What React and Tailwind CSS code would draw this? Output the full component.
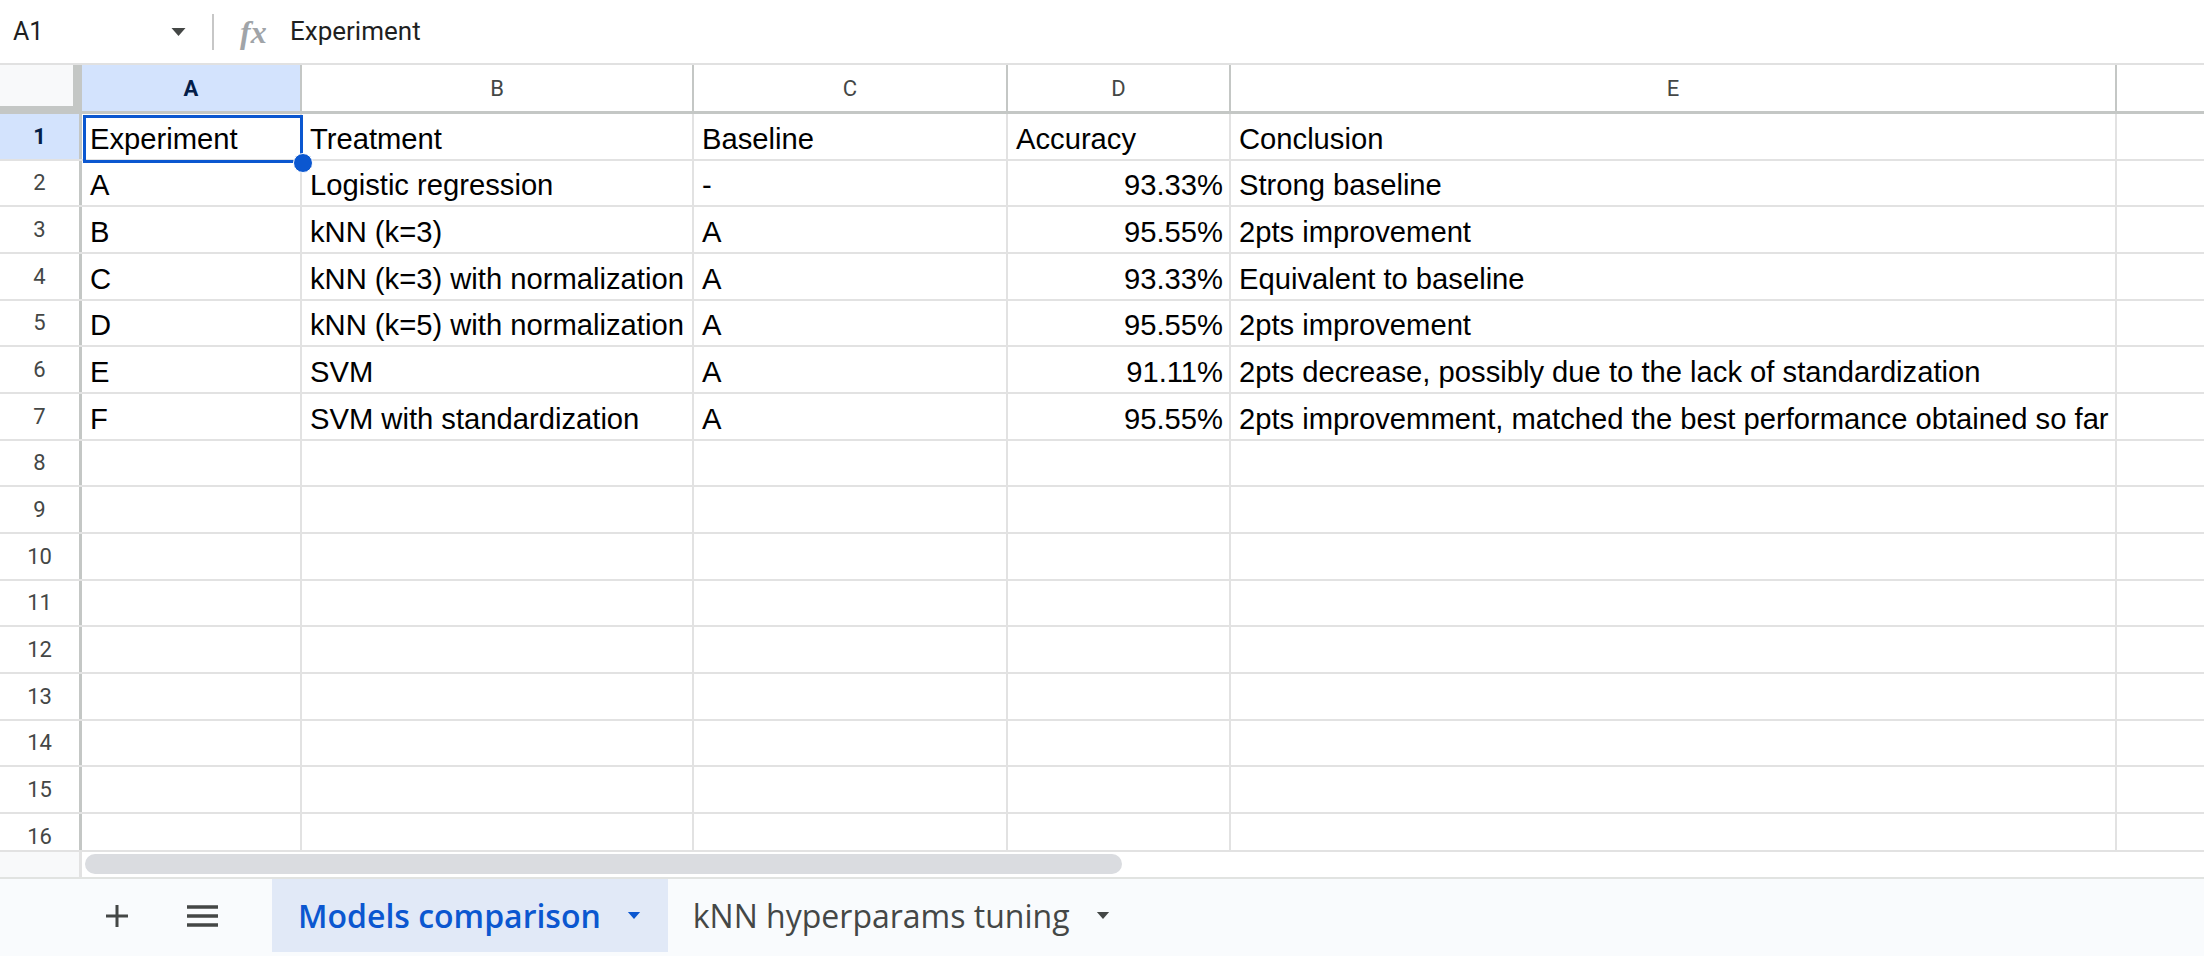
import React from "react";

const cols = [
  { id: "A", w: "w-[220px]" },
  { id: "B", w: "w-[392px]" },
  { id: "C", w: "w-[314px]" },
  { id: "D", w: "w-[223px]" },
  { id: "E", w: "w-[886px]" },
];

const data = [
  ["Experiment", "Treatment", "Baseline", "Accuracy", "Conclusion"],
  ["A", "Logistic regression", "-", "93.33%", "Strong baseline"],
  ["B", "kNN (k=3)", "A", "95.55%", "2pts improvement"],
  ["C", "kNN (k=3) with normalization", "A", "93.33%", "Equivalent to baseline"],
  ["D", "kNN (k=5) with normalization", "A", "95.55%", "2pts improvement"],
  ["E", "SVM", "A", "91.11%", "2pts decrease, possibly due to the lack of standardization"],
  ["F", "SVM with standardization", "A", "95.55%", "2pts improvemment, matched the best performance obtained so far"],
];

const rows = Array.from({ length: 16 }, (_, i) => data[i] || ["", "", "", "", ""]);

function Caret({ className }) {
  return (
    <svg viewBox="0 0 14 8" className={className}>
      <polygon points="0,0 14,0 7,8" fill="currentColor" />
    </svg>
  );
}

export default function App() {
  return (
    <div className="flex h-[956px] w-full flex-col overflow-hidden bg-white text-black">
      {/* name box + formula */}
      <div className="flex h-[63px] shrink-0 items-center pl-[13px] font-['Roboto',sans-serif] text-[#1f1f1f]">
        <span className="w-[157px] text-[25px]">A1</span>
        <Caret className="h-[8px] w-[17px] text-[#444746]" />
        <div className="ml-[25px] h-[36px] w-[2px] bg-[#c7c7c7]" />
        <span className="ml-[26px] w-[30px] font-['Liberation_Serif',serif] text-[32px] font-bold italic leading-none text-[#a0a4a8]">
          fx
        </span>
        <span className="ml-[20px] text-[26px]">Experiment</span>
      </div>

      {/* column headers */}
      <div className="flex h-[51px] shrink-0 border-t-2 border-[#e1e1e1] font-['Roboto',sans-serif] text-[22px]">
        <div className="w-[82px] shrink-0 border-b-[8px] border-r-[9px] border-[#c4c7c5] bg-[#f8f9fa]" />
        {cols.map((c) => (
          <div
            key={c.id}
            className={`${c.w} flex shrink-0 items-center justify-center border-b-[3px] border-r-2 border-[#c4c7c5] ${
              c.id === "A" ? "bg-[#d3e3fd] font-bold text-[#041e49]" : "text-[#444746]"
            }`}
          >
            {c.id}
          </div>
        ))}
        <div className="flex-1 border-b-[3px] border-[#c4c7c5]" />
      </div>

      {/* grid body */}
      <div className="relative h-[736px] shrink-0 overflow-hidden">
        {rows.map((r, i) => (
          <div key={i} className="flex h-[46.67px] border-b-2 border-[#e2e2e2]">
            <div
              className={`flex w-[82px] shrink-0 items-center justify-center border-r-[3px] border-[#c4c7c5] font-['Roboto',sans-serif] text-[22px] ${
                i === 0 ? "bg-[#d3e3fd] font-bold text-[#041e49]" : "text-[#444746]"
              }`}
            >
              {i + 1}
            </div>
            {cols.map((c, j) => (
              <div
                key={c.id}
                className={`${c.w} flex shrink-0 items-end whitespace-nowrap border-r-2 border-[#e2e2e2] pb-[5px] font-['Liberation_Sans',Arial,sans-serif] text-[29.2px] leading-[29px] ${
                  j === 3 && i > 0 ? "justify-end pr-[6px]" : "pl-[8px]"
                }`}
              >
                {r[j]}
              </div>
            ))}
            <div className="flex-1" />
          </div>
        ))}

        {/* active cell A1 */}
        <div className="absolute left-[83px] top-[1px] h-[48px] w-[220px] border-[3px] border-[#0b57d0]" />
        <div className="absolute left-[293px] top-[39px] h-[20px] w-[20px] rounded-full border border-white bg-[#0b57d0]" />
      </div>

      {/* horizontal scrollbar */}
      <div className="flex h-[27px] shrink-0 border-t-2 border-[#e2e2e2]">
        <div className="w-[82px] shrink-0 border-r-[3px] border-[#e2e2e2] bg-[#f8f9fa]" />
        <div className="pl-[3px] pt-[2px]">
          <div className="h-[20px] w-[1037px] rounded-full bg-[#dadce0]" />
        </div>
      </div>

      {/* sheet tabs */}
      <div className="flex-1 border-t-2 border-[#e1e3e1] bg-[#f9fbfd] font-['Open_Sans',sans-serif] text-[32px]">
        <div className="flex h-[73px] items-center">
          <svg viewBox="0 0 22 22" className="ml-[106px] h-[22px] w-[22px] text-[#444746]">
            <path d="M11 0v22M0 11h22" stroke="currentColor" strokeWidth="3" />
          </svg>
          <svg viewBox="0 0 31 22" className="ml-[59px] h-[22px] w-[31px] text-[#444746]">
            <path d="M0 2h31M0 11h31M0 20h31" stroke="currentColor" strokeWidth="3.5" />
          </svg>
          <div className="ml-[54px] flex h-full items-center bg-[#e1e9f7] pl-[26px] pr-[27px] font-semibold text-[#0b57d0]">
            <span>Models comparison</span>
            <Caret className="ml-[26px] h-[7px] w-[14px]" />
          </div>
          <div className="flex h-full items-center pl-[25px] text-[#444746]">
            <span>kNN hyperparams tuning</span>
            <Caret className="ml-[26px] h-[7px] w-[14px]" />
          </div>
        </div>
      </div>
    </div>
  );
}
